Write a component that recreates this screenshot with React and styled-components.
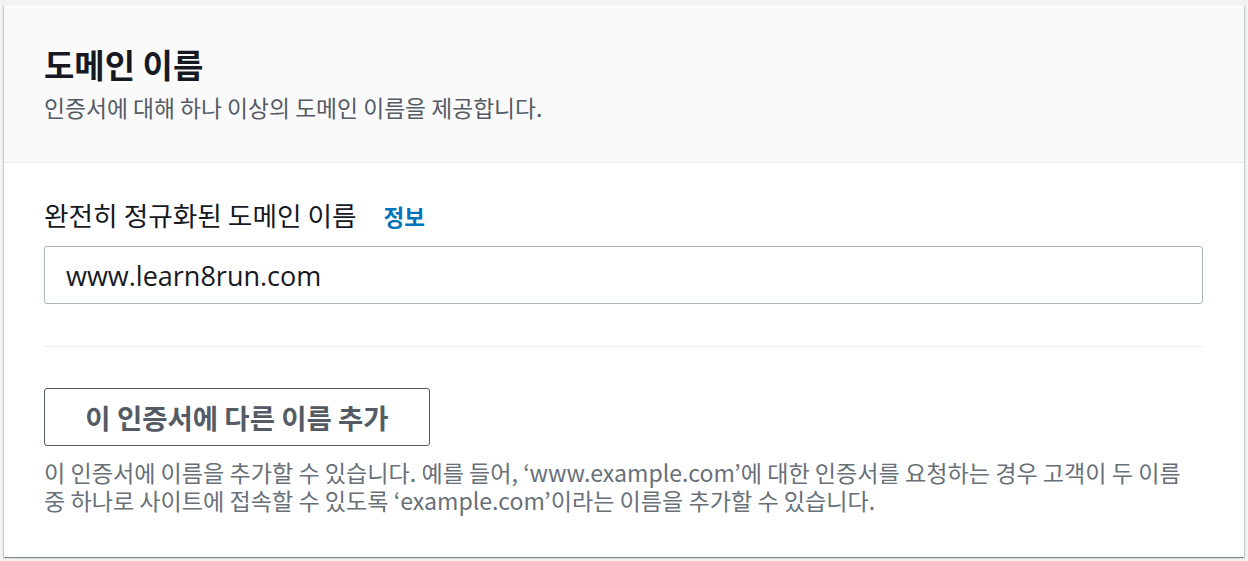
import React from "react";
import styled, { createGlobalStyle } from "styled-components";

const Global = createGlobalStyle`
  html, body { margin: 0; padding: 0; background: #f2f3f3; }
  body { font-family: "Noto Sans CJK KR", "Noto Sans", sans-serif; }
  * { box-sizing: border-box; }
`;

const Page = styled.div`
  padding: 5px 4px 4px 4px;
`;

const Card = styled.section`
  background: #ffffff;
  height: 552px;
  box-shadow: 0 1px 1px 0 rgba(0, 28, 36, 0.3), 1px 1px 1px 0 rgba(0, 28, 36, 0.15),
    -1px 1px 1px 0 rgba(0, 28, 36, 0.15);
  display: flex;
  flex-direction: column;
`;

const Header = styled.header`
  background: #fafafa;
  border-bottom: 1px solid #eaeded;
  height: 158px;
  padding: 39px 40px 0 40px;
`;

const Title = styled.h2`
  margin: 0;
  font-size: 33px;
  line-height: 40px;
  font-weight: 700;
  color: #16191f;
`;

const Description = styled.p`
  margin: 9px 0 0 0;
  font-size: 22.8px;
  line-height: 30px;
  color: #545b64;
`;

const Body = styled.div`
  padding: 32px 41px 0 40px;
  display: flex;
  flex-direction: column;
`;

const LabelRow = styled.div`
  display: flex;
  align-items: baseline;
  gap: 27px;
  height: 40px;
`;

const Label = styled.label`
  font-size: 26.7px;
  line-height: 40px;
  color: #16191f;
`;

const InfoLink = styled.a`
  font-size: 22.5px;
  font-weight: 700;
  color: #0073bb;
  text-decoration: none;
`;

const Input = styled.input`
  margin-top: 11px;
  height: 58px;
  width: 100%;
  border: 1px solid #aab7b8;
  border-radius: 3px;
  padding: 0 21px;
  font-family: "Open Sans", "Noto Sans", sans-serif;
  font-size: 27px;
  color: #16191f;
  background: #fff;
  outline: none;
`;

const Divider = styled.hr`
  margin: 42px 0 0 0;
  border: none;
  border-top: 1px solid #eaeded;
  height: 0;
`;

const AddButton = styled.button`
  margin-top: 41px;
  align-self: flex-start;
  height: 58px;
  width: 386px;
  border: 1px solid #545b64;
  border-radius: 3px;
  background: #fff;
  color: #545b64;
  font-family: "Noto Sans CJK KR", "Noto Sans", sans-serif;
  font-size: 27.5px;
  font-weight: 700;
  padding: 0;
`;

const Help = styled.p`
  margin: 12px 0 0 0;
  font-size: 23.1px;
  line-height: 28px;
  color: #687078;
  white-space: nowrap;
`;

export default function App() {
  return (
    <>
      <Global />
      <Page>
        <Card>
          <Header>
            <Title>도메인 이름</Title>
            <Description>인증서에 대해 하나 이상의 도메인 이름을 제공합니다.</Description>
          </Header>
          <Body>
            <LabelRow>
              <Label>완전히 정규화된 도메인 이름</Label>
              <InfoLink href="#">정보</InfoLink>
            </LabelRow>
            <Input defaultValue="www.learn8run.com" />
            <Divider />
            <AddButton>이 인증서에 다른 이름 추가</AddButton>
            <Help>
              이 인증서에 이름을 추가할 수 있습니다. 예를 들어, ‘www.example.com’에 대한 인증서를 요청하는 경우 고객이 두 이름
              <br />
              중 하나로 사이트에 접속할 수 있도록 ‘example.com’이라는 이름을 추가할 수 있습니다.
            </Help>
          </Body>
        </Card>
      </Page>
    </>
  );
}
